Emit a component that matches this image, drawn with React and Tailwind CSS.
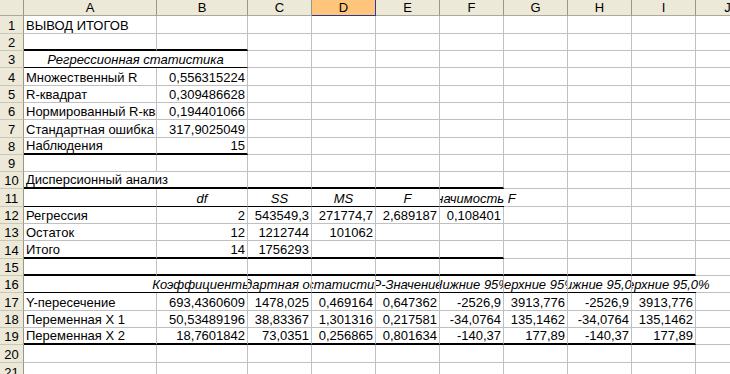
import React from 'react';

const W = ['w-[133px]', 'w-[91px]', 'w-16', 'w-16', 'w-16', 'w-16', 'w-16', 'w-16', 'w-16', 'w-16'];
const LETTERS = ['A', 'B', 'C', 'D', 'E', 'F', 'G', 'H', 'I', 'J'];
const HEIGHTS = [18, 17, 17, 18, 17, 17, 18, 17, 17, 17, 18, 17, 17, 18, 17, 17, 18, 17, 17, 18, 18];

const L = (t) => ({ t, a: 'l' });
const R = (t) => ({ t, a: 'r' });
const C = (t) => ({ t, a: 'c', i: true });

const DATA = {
  1: { A: L('ВЫВОД ИТОГОВ') },
  3: { A: { t: 'Регрессионная статистика', i: true, nr: true, wrap: ['w-[223px]', 'w-[223px]'] } },
  4: { A: L('Множественный R'), B: R('0,556315224') },
  5: { A: L('R-квадрат'), B: R('0,309486628') },
  6: { A: L('Нормированный R-квадрат'), B: R('0,194401066') },
  7: { A: L('Стандартная ошибка'), B: R('317,9025049') },
  8: { A: L('Наблюдения'), B: R('15') },
  10: { A: { t: 'Дисперсионный анализ', a: 'l', nr: true, vis: true } },
  11: {
    B: C('df'), C: C('SS'), D: C('MS'), E: C('F'),
    F: { t: 'Значимость F', i: true, nr: true, wrap: ['w-[127px]', 'w-[64px]'] },
  },
  12: { A: L('Регрессия'), B: R('2'), C: R('543549,3'), D: R('271774,7'), E: R('2,689187'), F: R('0,108401') },
  13: { A: L('Остаток'), B: R('12'), C: R('1212744'), D: R('101062') },
  14: { A: L('Итого'), B: R('14'), C: R('1756293') },
  16: {
    A: { nr: true },
    B: { t: 'Коэффициенты', i: true, wrap: ['-ml-[133px] w-[223px]', 'ml-[133px] w-[90px]'] },
    C: C('Стандартная ошибка'), D: C('t-статистика'), E: C('P-Значение'), F: C('Нижние 95%'),
    G: C('Верхние 95%'), H: C('Нижние 95,0%'),
    I: { t: 'Верхние 95,0%', i: true, nr: true, wrap: ['w-[127px]', 'w-[64px]'] },
  },
  17: { A: L('Y-пересечение'), B: R('693,4360609'), C: R('1478,025'), D: R('0,469164'), E: R('0,647362'), F: R('-2526,9'), G: R('3913,776'), H: R('-2526,9'), I: R('3913,776') },
  18: { A: L('Переменная X 1'), B: R('50,53489196'), C: R('38,83367'), D: R('1,301316'), E: R('0,217581'), F: R('-34,0764'), G: R('135,1462'), H: R('-34,0764'), I: R('135,1462') },
  19: { A: L('Переменная X 2'), B: R('18,7601842'), C: R('73,0351'), D: R('0,256865'), E: R('0,801634'), F: R('-140,37'), G: R('177,89'), H: R('-140,37'), I: R('177,89') },
};

// row -> [type, number of columns from A]
const BOTTOMS = {
  2: ['k', 2],
  3: ['t', 2],
  8: ['k', 2],
  10: ['k', 6],
  11: ['t', 6],
  14: ['k', 6],
  15: ['k', 9],
  16: ['t', 9],
  19: ['k', 9],
};

function Cell({ col, spec, bottom }) {
  const b =
    bottom === 'k'
      ? 'border-b-2 border-b-black'
      : bottom === 't'
      ? 'border-b border-b-black'
      : 'border-b border-b-[#c0c0c0]';
  const r = spec && spec.nr ? '' : 'border-r border-r-[#c0c0c0]';
  let content = null;
  if (spec && spec.t) {
    if (spec.wrap) {
      content = (
        <div className={`${spec.wrap[0]} shrink-0 overflow-hidden flex`}>
          <div className={`${spec.wrap[1]} shrink-0 flex justify-center whitespace-nowrap leading-[15px] ${spec.i ? 'italic' : ''}`}>
            {spec.t}
          </div>
        </div>
      );
    } else {
      const j = spec.a === 'r' ? 'justify-end' : spec.a === 'c' ? 'justify-center' : 'justify-start';
      const ov = spec.vis ? 'overflow-visible' : 'overflow-hidden';
      content = (
        <div className={`w-full min-w-0 flex ${j} ${ov} whitespace-nowrap px-[2px] leading-[15px] ${spec.i ? 'italic' : ''}`}>
          {spec.t}
        </div>
      );
    }
  }
  return <div className={`${W[col]} shrink-0 h-full flex items-end ${b} ${r}`}>{content}</div>;
}

function Row({ n }) {
  const h = HEIGHTS[n - 1] === 18 ? 'h-[18px]' : 'h-[17px]';
  const data = DATA[n] || {};
  const bt = BOTTOMS[n];
  return (
    <div className={`flex ${h}`}>
      <div className="w-6 shrink-0 h-full flex items-end justify-center bg-[#ECE9D8] border-r border-r-[#9a9784] border-b border-b-[#cbc7b4] leading-[15px]">
        {n}
      </div>
      {LETTERS.map((L, i) => (
        <Cell key={L} col={i} spec={data[L]} bottom={bt && i < bt[1] ? bt[0] : null} />
      ))}
    </div>
  );
}

export default function App() {
  const rows = [];
  for (let n = 1; n <= 21; n++) rows.push(<Row key={n} n={n} />);
  return (
    <div className="w-[730px] h-[374px] overflow-hidden bg-white text-black text-[13px] font-['Liberation_Sans',Arial,sans-serif]">
      <div className="flex h-4">
        <div className="w-6 shrink-0 h-full bg-[#ECE9D8] border-r border-r-[#9a9784] border-b border-b-[#aca899]" />
        {LETTERS.map((L, i) => (
          <div
            key={L}
            className={`${W[i]} shrink-0 h-full flex items-end justify-center leading-[15px] border-r border-b ${
              L === 'D'
                ? 'bg-[#FFC57A] border-r-[#2b3a98] border-b-[#2b3a98]'
                : 'bg-[#ECE9D8] border-r-[#9a9784] border-b-[#aca899]'
            }`}
          >
            {L}
          </div>
        ))}
      </div>
      {rows}
    </div>
  );
}
